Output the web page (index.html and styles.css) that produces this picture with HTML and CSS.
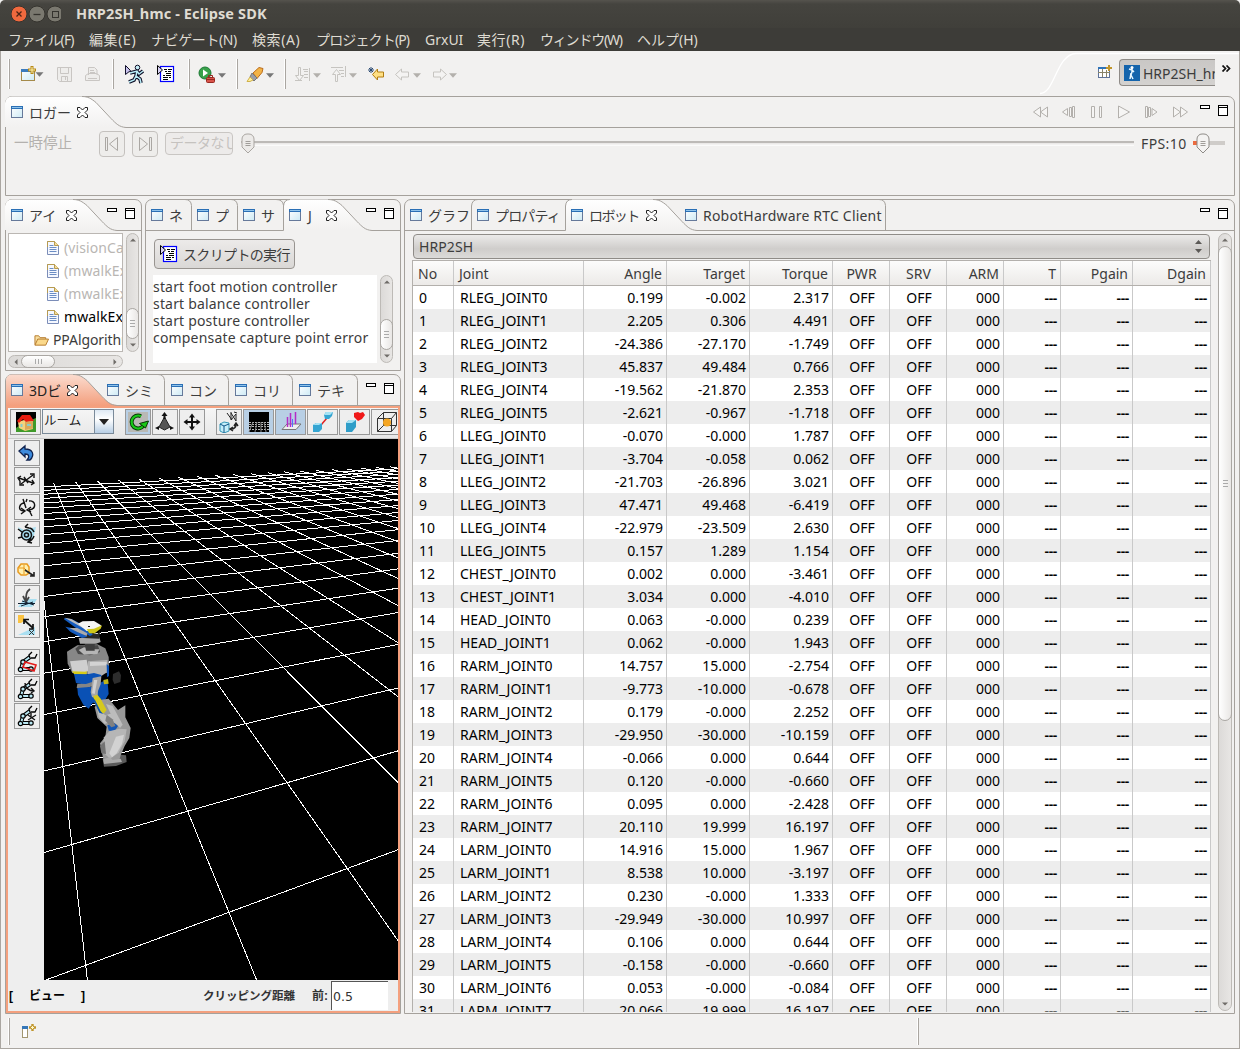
FILE: index.html
```html
<!DOCTYPE html>
<html lang="ja">
<head>
<meta charset="utf-8">
<title>HRP2SH_hmc - Eclipse SDK</title>
<link rel="stylesheet" href="styles.css">
</head>
<body>
<svg class="defs" width="0" height="0">
  <defs>
    <linearGradient id="tabFill" x1="0" y1="0" x2="0" y2="1"><stop offset="0" stop-color="#fff"/><stop offset="1" stop-color="#f2f1f0"/></linearGradient>
    <linearGradient id="hotFill" x1="0" y1="0" x2="0" y2="1"><stop offset="0" stop-color="#fbdccf"/><stop offset="1" stop-color="#f39a77"/></linearGradient>
    <linearGradient id="winFill" x1="0" y1="0" x2="1" y2="1"><stop offset="0" stop-color="#fff"/><stop offset="1" stop-color="#cdeaf5"/></linearGradient>
    <symbol id="win" viewBox="0 0 12 12"><rect x=".5" y=".5" width="11" height="11" fill="url(#winFill)" stroke="#66799a"/><path d="M0 1.5h12" stroke="#2a6fb5" stroke-width="3"/><path d="M1 1.5h10" stroke="#8fc3ea" stroke-width="1"/></symbol>
    <symbol id="close" viewBox="0 0 11 11"><path d="M.5.5h2.500l2.500 2.500 2.500-2.500h2.500v2.500l-2.500 2.500 2.500 2.500v2.500h-2.500l-2.500-2.500-2.500 2.500h-2.500v-2.500l2.500-2.500-2.500-2.500z" fill="#fff" stroke="#222"/></symbol>
    <symbol id="min" viewBox="0 0 10 4"><rect x=".5" y=".5" width="9" height="3" fill="#fff" stroke="#000"/></symbol>
    <symbol id="max" viewBox="0 0 10 11"><rect x=".5" y=".5" width="9" height="10" fill="#fff" stroke="#000"/><path d="M0 2.500h10" stroke="#000"/></symbol>
    <symbol id="drop" viewBox="0 0 8 5"><path d="M0 .3h8l-4 4.500z"/></symbol>
    <symbol id="doc" viewBox="0 0 12 14"><path d="M.5.5h7l4 4v9h-11z" fill="#f5f8ff" stroke="#7b8db8"/><path d="M.5 6V.5h7l4 4" fill="none" stroke="#b79b50"/><path d="M7.500.5v4h4" fill="#f3dc9a" stroke="#b79b50"/><path d="M2.500 4.500h4M2.500 6.500h7M2.500 8.500h7M2.500 10.500h7" stroke="#6b8dc4"/></symbol>
    <symbol id="script" viewBox="0 0 18 18"><rect x="3.500" y="1.500" width="13" height="15" fill="#fff" stroke="#00f" stroke-width="1.200"/><path d="M7 4.500h3m1 0h4M8 6.500h2m1 0h3M9 8.500h5M6 10.500h2m1 0h5M6 12.500h5m1 0h2M6 14.500h5" stroke="#000"/><path d="M.5.5v9l5-4.500z" fill="#d9d2f5" stroke="#000"/></symbol>
    <symbol id="down" viewBox="0 0 8 5"><path d="M0 .5h8L4 4.500z" fill="#6f6c68"/></symbol>
    <symbol id="arm" viewBox="0 0 22 22"><path d="M5 18L7 11L14 6M5 18h11" fill="none" stroke="#000" stroke-width="4"/><path d="M5 18L7 11L14 6M5 18h11" fill="none" stroke="#b9e8f3" stroke-width="2"/><g fill="#b9e8f3" stroke="#000" stroke-width="1.200"><circle cx="4.500" cy="18.500" r="2.200"/><circle cx="7" cy="11" r="2.200"/><circle cx="15" cy="18" r="2.200"/></g><path d="M14 7l-1-3 3-3M15 7h4l2-4" fill="none" stroke="#000" stroke-width="1.300"/></symbol>
  </defs>
</svg>

<div class="window">
  <header class="titlebar">
    <svg width="50" height="18" viewBox="0 0 50 18"><circle cx="8" cy="9" r="8" fill="#f0693e" stroke="#35332e"/><path d="M5.500 6.500l5 5m0-5l-5 5" stroke="#4d2415" stroke-width="1.300"/><circle cx="26" cy="9" r="8" fill="#7a786f" stroke="#35332e"/><path d="M22.500 9.500h7" stroke="#35332e" stroke-width="1.300"/><circle cx="44" cy="9" r="8" fill="#7a786f" stroke="#35332e"/><rect x="41.500" y="6.500" width="6" height="6" fill="none" stroke="#35332e"/></svg>
    <h1>HRP2SH_hmc - Eclipse SDK</h1>
  </header>
  <nav class="menu"><span class="n2">ファイル(F)</span><span class="p1">編集(E)</span><span class="n1">ナビゲート(N)</span><span class="p1">検索(A)</span><span class="n2">プロジェクト(P)</span><span>GrxUI</span><span class="p1">実行(R)</span><span class="n3">ウィンドウ(W)</span><span>ヘルプ(H)</span></nav>

  <div class="toolbar">
    <svg class="toolicons" width="470" height="45" viewBox="0 51 470 45" fill="none">
      <g stroke="#aaa6a1"><path d="M9.500 59v30M113.500 59v30M189.500 59v30M237.500 59v30M285.500 59v30"/></g>
      <g stroke="#fff"><path d="M8.500 59v30M112.500 59v30M188.500 59v30M236.500 59v30M284.500 59v30"/></g>
      <rect x="21.500" y="69.500" width="13" height="11" fill="url(#winFill)" stroke="#a58a4a"/><path d="M21 70.500h10" stroke="#3b7bbd" stroke-width="3"/><path d="M32 66v8m-4-4h8" stroke="#b88a18" stroke-width="3"/><path d="M32 67v6m-3-3h6" stroke="#fff3b0"/>
      <g fill="#777"><use href="#drop" x="35" y="72" width="9" height="5"/><use href="#drop" x="218" y="73" width="8" height="5"/><use href="#drop" x="266" y="73" width="8" height="5"/></g>
      <g fill="#b3b0ac"><use href="#drop" x="313" y="73" width="8" height="5"/><use href="#drop" x="349" y="73" width="8" height="5"/><use href="#drop" x="413" y="73" width="8" height="5"/><use href="#drop" x="449" y="73" width="8" height="5"/></g>
      <g stroke="#c9c6c3" fill="#eeedeb"><path d="M57.500 67.500h14v14h-12l-2-2z"/><path d="M60.500 68v5.500h8V68M61.500 81v-4.500h6V81M65.500 77v3"/><path d="M88.500 75v-7.500h6l2.500 2.500v5M85.500 75.500l3-2h8l3 2v5h-14zM90 70.500h4m-4 2h5M88 78.500h9"/></g>
      <path d="M130 73l7-2 2 3 4-3M137 71l-1 5 4 3 1 4M136 76l-2 4-5 2" stroke="#101028" stroke-width="3.600"/><circle cx="137.500" cy="67.500" r="2.300" fill="#c6eef8" stroke="#101028"/><path d="M130 73l7-2 2 3 4-3M137 71l-1 5 4 3 1 4M136 76l-2 4-5 2" stroke="#b9edf8" stroke-width="1.500"/><path d="M125.500 65.500v9l5-4z" fill="#c9c2ee" stroke="#101028"/>
      <use href="#script" x="157" y="65" width="18" height="18"/>
      <circle cx="205" cy="73" r="6" fill="#38a14a" stroke="#1d7a35"/><path d="M203 69.500v7l5-3.500z" fill="#fff"/><rect x="206.500" y="77.500" width="8" height="5" rx="1" fill="#d9534a" stroke="#982821"/><path d="M208.500 77v-1.500h4V77M207 79.500h7" stroke="#982821"/>
      <path d="M253 73l6-5.500 4 1-1 4-5 6z" fill="#f2b347" stroke="#bb6d1d"/><path d="M252 73l5 5-3 3-4-4z" fill="#9a9ea8" stroke="#777"/><path d="M250 77l3 3-3 1.500h-3z" fill="#ffef9b" stroke="#d0b14a"/>
      <g stroke="#c6c4c0" fill="#f4f3f2"><path d="M298.500 67.500h2v8h3l-4 5-4-5h3zM303 69.500h5m-4 2h4m-4 3h4m-4 3h4M295 80.500h7M309.500 68v13"/><path d="M335.500 81.500v-7h-3l4-5 4 5h-3v7zM331 67.500h12m-4 3h5m-3 3h3m-3 3h3M345.500 66v11"/><path d="M395.500 74.500l6-5.500v3h7v5h-7v3zM446.500 74.500l-6-5.500v3h-7v5h7v3z"/></g>
      <path d="M372.500 74.500l5-5.500v3h6v5h-6v3z" fill="#ffe084" stroke="#b17d12"/><path d="M371 67v6m-3-3h6m-5-2l4 4m0-4l-4 4" stroke="#2b4a73"/>
    </svg>
    <svg class="perspcurve" width="200" height="45" viewBox="1040 51 200 45"><path d="M960 93.500h80c15 0 16-39 36-40h163" fill="none" stroke="#fff" stroke-width="1.300"/></svg>
    <svg class="openpersp" width="14" height="14" viewBox="0 0 14 14"><rect x=".5" y="2.500" width="11" height="10" fill="#fff" stroke="#5f7399"/><path d="M0 3h9" stroke="#2f74b8" stroke-width="2"/><path d="M4.500 4v8M0 7.500h12M8.500 5v7" stroke="#8a8468"/><path d="M11 0v6M8 3h6" stroke="#c0952a" stroke-width="2"/></svg>
    <div class="persp"><svg width="16" height="16" viewBox="0 0 16 16"><path fill="#1464ac" d="M0 0h16v16H0z"/><path d="M8 2v5l-1 3 2 4M5 4l3 1 2 2M7 8l-1 6" stroke="#e8f6ff" stroke-width="1.500" fill="none"/><circle cx="8" cy="2.500" r="1.500" fill="#fff"/></svg><span>HRP2SH_hmc</span></div>
    <svg class="chev" width="9" height="7" viewBox="0 0 9 7"><path d="M.5.5l3 3-3 3m4-6l3 3-3 3" fill="none" stroke="#111" stroke-width="1.700"/></svg>
  </div>

  <main class="workbench">
    <section class="panel logger">
      <div class="tabs">
        <svg class="frame" width="1230" height="32" fill="none"><path d="M0 31V7Q1 .5 7 .5H77c6 0 9 2 14 6l15 16c5 5 8 8 15 8.500H0z" fill="url(#tabFill)"/><path d="M77 .5c6 0 9 2 14 6l15 16c5 5 8 8.500 15 9h1109" stroke="#a5a19c"/></svg>
        <div class="tab"><svg><use href="#win"/></svg><span>ロガー</span><svg class="x"><use href="#close"/></svg></div>
        <svg class="play" width="156" height="14" viewBox="1032 105 156 14" fill="#f6f5f4" stroke="#b3b0ac"><path d="M1040.500 107v10l-7-5zM1047.500 107v10l-7-5zM1067.500 108.500v7l-5-3.500zM1069.500 107.500h2v9h-2zM1072.500 106.500h2v11h-2zM1091.500 106.500h3v11h-3zM1099.500 106.500h2v11h-2zM1118.500 106v12l11-6zM1145.500 106.500h2v11h-2zM1148.500 107.500h2v9h-2zM1152 108.500v7l5-3.500zM1173.500 107v10l7-5zM1180.500 107v10l7-5z"/></svg>
        <svg class="minmax"><use href="#min" width="10" height="4"/><use href="#max" x="18" width="10" height="11"/></svg>
      </div>
      <div class="logbody">
        <span class="pause">一時停止</span>
        <button class="sq"><svg width="14" height="14" viewBox="0 0 14 14" fill="none" stroke="#aaa7a3"><path d="M.5.5h2v13h-2zM12.500.5v13l-8-6.500z"/></svg></button>
        <button class="sq"><svg width="14" height="14" viewBox="0 0 14 14" fill="none" stroke="#aaa7a3"><path d="M1.500.5v13l8-6.500zM11.500.5h2v13h-2z"/></svg></button>
        <div class="nodata">データなし</div>
        <div class="slider"><svg width="14" height="21" viewBox="0 0 14 21"><path d="M1 6a5 5 0 0 1 5-5h2a5 5 0 0 1 5 5v8l-6 6-6-6z" fill="#eceae8" stroke="#aaa6a2"/><path d="M4.500 8.500h5m-5 2h5m-5 2h5" stroke="#a09d99"/></svg></div>
        <span class="fps">FPS:10</span>
        <div class="slider small"><svg width="14" height="21" viewBox="0 0 14 21"><path d="M1 6a5 5 0 0 1 5-5h2a5 5 0 0 1 5 5v8l-6 6-6-6z" fill="#f4f3f2" stroke="#8e8b87"/><path d="M4.500 8.500h5m-5 2h5m-5 2h5" stroke="#a09d99"/></svg></div>
      </div>
    </section>

    <div class="columns">
      <div class="left">
        <div class="toprow">
          <section class="panel items">
            <div class="tabs">
              <svg class="frame" width="137" height="32" fill="none"><path d="M0 31V7Q1 .5 7 .5H68c6 0 9 2 14 6l15 16c5 5 8 8 15 8.500H0z" fill="url(#tabFill)"/><path d="M68 .5c6 0 9 2 14 6l15 16c5 5 8 8.500 15 9h25" stroke="#a5a19c"/></svg>
              <div class="tab"><svg><use href="#win"/></svg><span class="t24">アイ</span><svg class="x far"><use href="#close"/></svg></div>
              <svg class="minmax"><use href="#min" width="10" height="4"/><use href="#max" x="18" width="10" height="11"/></svg>
            </div>
            <div class="treewrap">
              <ul class="tree">
                <li class="off"><svg><use href="#doc"/></svg>(visionCapture)</li>
                <li class="off"><svg><use href="#doc"/></svg>(mwalkExec)</li>
                <li class="off"><svg><use href="#doc"/></svg>(mwalkExec)</li>
                <li class="on"><svg><use href="#doc"/></svg>mwalkExec</li>
                <li class="folder"><svg viewBox="0 0 16 14"><path d="M1 12V2.500h4l1.500 2h6V6" fill="#f8dfa0" stroke="#b4792b"/><path d="M1 12.500l3-6.500h11.500l-3 6.500z" fill="#fbd98b" stroke="#b4792b"/></svg>PPAlgorithm</li>
              </ul>
              <div class="vscroll"><svg class="up"><use href="#down"/></svg><i></i><svg><use href="#down"/></svg></div>
              <div class="hscroll"><svg class="lt"><use href="#down"/></svg><i></i><svg class="rt"><use href="#down"/></svg></div>
            </div>
          </section>

          <section class="panel jython">
            <div class="tabs g-jython">
              <svg class="frame" width="256" height="32" fill="none"><path d="M138.500 31V7Q139 .5 145 .5H183c6 0 9 2 14 6l15 16c5 5 8 8 15 8.500z" fill="url(#tabFill)"/><path d="M0 31.500H138.500V7Q139 .5 145 .5M183 .5c6 0 9 2 14 6l15 16c5 5 8 8.500 15 9h29M40 .5q6 0 6.500 6v25M86 .5q6 0 6.500 6v25M131 .5q7 0 7.500 6" stroke="#a5a19c"/></svg>
              <div class="tab"><svg><use href="#win"/></svg><span>ネ</span></div>
              <div class="tab"><svg><use href="#win"/></svg><span>プ</span></div>
              <div class="tab"><svg><use href="#win"/></svg><span>サ</span></div>
              <div class="tab"><svg><use href="#win"/></svg><span class="t10">J</span><svg class="x"><use href="#close"/></svg></div>
              <svg class="minmax"><use href="#min" width="10" height="4"/><use href="#max" x="18" width="10" height="11"/></svg>
            </div>
            <button class="runscript"><svg width="18" height="18"><use href="#script"/></svg>スクリプトの実行</button>
            <div class="console">
              <pre>start foot motion controller
start balance controller
start posture controller
compensate capture point error</pre>
              <div class="vscroll"><svg class="up"><use href="#down"/></svg><i></i><svg><use href="#down"/></svg></div>
            </div>
          </section>
        </div>

        <section class="panel view3d">
          <div class="tabs g-view">
            <svg class="frame" width="396" height="34" fill="none"><path d="M1 34V7Q1 .5 7 .5H68c6 0 9 2 14 6l15 16c5 5 8 8 15 8.500V34z" fill="url(#hotFill)"/><path d="M1 33.500V32H395v3H1z" fill="#f4a07e"/><path d="M68 .5c6 0 9 2 14 6l15 16c5 5 8 8.500 15 9h284M153 .5q6 0 6.500 6v25M217 .5q6 0 6.500 6v25M281 .5q6 0 6.500 6v25M346 .5q6 0 6.500 6v25" stroke="#a5a19c"/></svg>
            <div class="tab hot"><svg><use href="#win"/></svg><span>3Dビ</span><svg class="x"><use href="#close"/></svg></div>
            <div class="tab"><svg><use href="#win"/></svg><span>シミ</span></div>
            <div class="tab"><svg><use href="#win"/></svg><span>コン</span></div>
            <div class="tab"><svg><use href="#win"/></svg><span>コリ</span></div>
            <div class="tab"><svg><use href="#win"/></svg><span>テキ</span></div>
            <svg class="minmax"><use href="#min" width="10" height="4"/><use href="#max" x="18" width="10" height="11"/></svg>
          </div>
          <div class="viewbody">
            <div class="viewtools">
              <b class="w31"><svg width="20" height="20" viewBox="0 0 20 20"><path d="M0 0h20v20H0z"/><path d="M0 16l6-4 14-6v14H0z" fill="#3f9a2a"/><path d="M2 10l6-2 9 0v9l-8 2-6-3z" fill="#f3d27c"/><path d="M1 9l5-6 8 0 4 6-8 1-3-3-4 4z" fill="#e81c10"/><path d="M9 10v8l8-1.500V9z" fill="#d9a85a"/><path d="M11 12h4v2h-4zM4.500 12h2v3h-2z" fill="#8cc"/></svg></b>
              <div class="room"><span>ルーム</span><i><svg width="10" height="6" viewBox="0 0 10 6"><path d="M0 0h10L5 6z" fill="#222"/></svg></i></div>
              <b class="on g1"><svg width="22" height="22" viewBox="0 0 22 22"><path d="M1 1h20v20H1z" fill="#b9b9b5"/><path d="M14 5.200A6.500 6.500 0 1 0 17.500 12" fill="none" stroke="#063806" stroke-width="4"/><path d="M14 5.200A6.500 6.500 0 1 0 17.500 12" fill="none" stroke="#18c818" stroke-width="2.200"/><path d="M12.500 12.500l9-2.500-3 7z" fill="#18c818" stroke="#063806"/></svg></b>
              <b><svg width="22" height="22" viewBox="0 0 22 22"><path d="M10.500 6l5.500 10-5.500 3L5 16z" fill="#555" stroke="#222"/><path d="M7.500 5l3-4 3 4h-2v3h-2V5zM1 17l4-2v4zM20 17l-4-2v4z" fill="#111"/></svg></b>
              <b><svg width="22" height="22" viewBox="0 0 22 22"><path d="M11 4v14M4 11h14" stroke="#111" stroke-width="2"/><path d="M8 6.500L11 2.500l3 4zM8 15.500l3 4 3-4zM6.500 8l-4 3 4 3zM15.500 8l4 3-4 3z" fill="#111"/></svg></b>
              <b class="g1"><svg width="22" height="22" viewBox="0 0 22 22" fill="none" stroke="#222"><path d="M2 13l4-2 5 1v8l-5 2-4-2z" fill="#c5eefa" stroke="#3598b8"/><path d="M2 13l4 2 5-2M6 15v7" stroke="#158"/><path d="M9 2l5 7M13 1v8l5-6v7l-5-8M19 2l-3-1"/><path d="M13 18q5 0 5-5m-2 2l2-3 2 3m-5 1l-3 2 3 2" stroke-width="1.500"/></svg></b>
              <b class="on w31"><svg width="22" height="22" viewBox="0 0 22 22"><path d="M1 1h20v20H1z"/><path d="M1 11.500h20M1 13.500h20M1 15.500h20M1 18.500h20" stroke="#bbb" stroke-dasharray="2 1"/><path d="M5 11l-4 10M9 11l-2 10M13 11v10M16 11l2 10" stroke="#888"/></svg></b>
              <b class="on w31"><svg width="22" height="22" viewBox="0 0 22 22"><path d="M2 18.500l5-5.500h14l-5 5.500z" fill="#eee" stroke="#777"/><path d="M7.500 6v10M10.500 2v14M15.500 1v12" stroke="#b42bc7" stroke-width="1.500"/><path d="M12.500 8v8" stroke="#546eff"/></svg></b>
              <b class="w31"><svg width="22" height="22" viewBox="0 0 22 22"><path d="M9 14l6-7" stroke="#e02020" stroke-width="1.500"/><path d="M1 14l3-2h6v6l-3 3H1zM12 4l2-3h7l-1 4-3 3h-4z" fill="#35a5d2"/><path d="M1 14l3-2h6l-3 2zM12 4l2-3h7l-3 3z" fill="#a5e2f4"/></svg></b>
              <b class="w31"><svg width="22" height="22" viewBox="0 0 22 22"><path d="M2 12l3-3h7v7l-4 5H2z" fill="#2f9dc8"/><path d="M2 12l3-3h7l-4 3z" fill="#a5e2f4"/><path d="M10 2l4-1 2 1 3-1 2 3-3 4-4 2-4-4z" fill="#f01818"/></svg></b>
              <b class="w31"><svg width="22" height="22" viewBox="0 0 22 22" fill="none" stroke="#333"><path d="M1.500 7.500h14v13h-14zM7.500 1.500h13v13h-13zM1.500 7.500l6-6M15.500 7.500l5-6M15.500 20.500l5-6M1.500 20.500l6-6"/><circle cx="11" cy="11.500" r="4" fill="#f5a623" stroke="none"/></svg></b>
            </div>
            <div class="viewmid">
              <div class="sidetools">
                <b><svg viewBox="0 0 22 22"><path d="M3 9l6-5v3c8 0 10 6 5 11h-3c3-3 2-6-2-6v3z" fill="#3d8bdd" stroke="#10234f" stroke-width="1.300"/></svg></b>
                <b><svg viewBox="0 0 22 22" fill="none" stroke="#111" stroke-width="1.400"><path d="M3 9l14 5M5 15L17 6M8 8l4 6"/><path d="M5 7l-3 2 2 3M14 5l4 0 0 4m-3 7l3-2-2-3M4 12v4h4"/></svg></b>
                <b><svg viewBox="0 0 22 22" fill="none" stroke="#111" stroke-width="1.400"><path d="M7 3l3 9M11 3l-1 3M13 14l3 6M8 15C1 15 3 7 9 7M13 5c7-1 8 8 0 9M5 12l4 3-4 3M15 11l-4 3 4 2"/></svg></b>
                <b><svg viewBox="0 0 22 22"><path d="M2 4l6 3 3-1 9-2-3 12-9 1z" fill="#a9dff1"/><g fill="none" stroke="#111" stroke-width="1.500"><circle cx="10.500" cy="12" r="5"/><circle cx="10.500" cy="12" r="2"/><path d="M9 4l3-3m-3 3l4 1c3 0 4 2 5 4M18 13c-1 3-3 5-6 6m3-4l-3 4 4 1M2 6l4 3M2 15l4-1"/></g></svg></b>
                <b class="gap"><svg viewBox="0 0 22 22"><path d="M2 8l3-4h6l2 3v6l-3 2H5l-3-3z" fill="#fff0b0" stroke="#e99a1e" stroke-width="1.500"/><path d="M3 8h5l2 2M8 5v9" fill="none" stroke="#e99a1e"/><path d="M9 10l9 6m0-4v4h-4" fill="none" stroke="#222" stroke-width="1.600"/></svg></b>
                <b><svg viewBox="0 0 22 22"><path d="M2 20l6-8h13l-5 8z" fill="#a9dff1"/><path d="M14 2c-4 3-4 6-4 12M7 9l3 6 3-5" fill="none" stroke="#444" stroke-width="1.800"/><path d="M6 14l12 4M5 19l12-4M2 16.500h17" stroke="#123"/></svg></b>
                <b><svg viewBox="0 0 22 22"><path d="M2 1h6v6l-3 2H2z" fill="#fbc342"/><path d="M2 21l17-8v8z" fill="#a9dff1"/><path d="M8 6l9 8M8 10V5.500h5M17 10v5h-4" fill="none" stroke="#111" stroke-width="1.700"/><path d="M13 16l5 5m0-5l-5 5" stroke="#333"/></svg></b>
                <b class="gap"><svg viewBox="0 0 22 22"><use href="#arm"/><path d="M9 11l11 3-2 6-11-4z" fill="none" stroke="#e21b1b" stroke-width="1.600"/></svg></b>
                <b><svg viewBox="0 0 22 22"><use href="#arm"/><path d="M9 5c0 5 4 8 9 8m-3-3l3 3-3 2" fill="none" stroke="#111" stroke-width="1.400"/></svg></b>
                <b><svg viewBox="0 0 22 22"><use href="#arm"/><path d="M12 10l7 5m-7 0l8-5m-5-2v4" fill="none" stroke="#111" stroke-width="1.400"/></svg></b>
              </div>
              <svg class="scene" width="354" height="541" viewBox="0 0 354 541">
                <g id="floor" fill="none" stroke="#fff" shape-rendering="crispEdges"></g>
                <g transform="translate(6 161) scale(.33333)">
                  <path d="M189 222l18-8 6 12-2 20-18 6-5-12z" fill="#2d2d2d"/>
                  <path d="M158 478l56-14 14 2 2 20-32 12-36 2z" fill="#5a5a5a"/>
                  <path d="M82 136l60-3 24 12 10 26 1 28-6 20-70 4-34-4-14-28-2-36z" fill="#878787"/>
                  <path d="M76 146l12-10h56l6 20-30 10-36-4z" fill="#484848"/>
                  <path d="M86 150l16-8 34 6 12 0-6 14-40 2z" fill="#b5b5b5"/><path d="M104 130h30v22h-26z" fill="#3e3e3e"/>
                  <path d="M60 184l50-5 6 32-12 10-36-4z" fill="#cfcfcf"/><path d="M114 184l58-4v36l-18 12-40-6z" fill="#b3b3b3"/><path d="M120 186h50v10l-50 2z" fill="#d3d3d3"/>
                  <path d="M66 214l40 1 4-3v12H74z" fill="#d6cb18"/><path d="M72 222l40 1 20-4 22 6-2 18-42 12-32-6z" fill="#0b52b7"/>
                  <path d="M82 251l26 1 18-6 2 12-26 10-22-4z" fill="#858585"/><path d="M82 264l44-4 34-16 12-6 4 44-18 30-30-4-12 18-16-12-16-30z" fill="#0a51b5"/>
                  <path d="M170 192l7 6v30l-6 4z" fill="#0a51b5"/><path d="M160 240l14-3 2 14-14 2z" fill="#c0b518"/>
                  <path d="M128 234l26-5-2 24-8 20-2 24-16-6-4-14z" fill="#a7a7a7"/><path d="M132 240l10 0-8 42-8-2z" fill="#d0d0d0"/>
                  <path d="M134 322l14-22 28-4 28 34 22-14v36l16 32-4 30-14 24-12 28-4 14-46 8-8-40-4-18 16-20 4-30-28-26z" fill="#999"/>
                  <path d="M142 326l24 20 26-8 10 34-22-6-16 6-18-20z" fill="#bdbdbd"/><path d="M168 312l20 6 30 56-8 10-16-18z" fill="#bcbcbc"/>
                  <path d="M130 288l12-4 10 12 18 34-8 10-14-2-14-30z" fill="#d5c91d"/><path d="M130 300l18 38 12 4-8-8-18-36z" fill="#0a51b5"/>
                  <path d="M172 376l20-8 12 10-10 16-18-2z" fill="#1457b5"/><path d="M170 344l18 14 8 20-12 4-18-20z" fill="#808080"/>
                  <path d="M162 412l16-18 30-8 22 2-6 36-18 34-26 18-24-22z" fill="#b6b6b6"/><path d="M198 410l24-6-6 28-16 28-14 12-8-12z" fill="#d2d2d2"/><path d="M150 438l14-14 4 38-14-2z" fill="#737373"/>
                  <path d="M160 478l20-6 8 8 24-4 4 10-54 6z" fill="#aaa"/>
                  <path d="M86 114l62-2 4 14-14 5-48 0z" fill="#a9a9a9"/><path d="M102 92l40 10 8-10-2 24-48-2z" fill="#282828"/>
                  <path d="M44 54l22 4 46 24 16 22-8 4-42-24-36-26z" fill="#155cbf"/><path d="M44 53l20 4 48 28-12 0z" fill="#bbb"/><path d="M46 80l32 6 34 24-16 4-34-18z" fill="#155cbf"/><path d="M58 84l24 0 30 16-2 8-28-12z" fill="#aaa"/>
                  <path d="M84 71l14-7 34-1 20 12 2 6-30 12-14 0z" fill="#f4f4f4"/><path d="M110 88l22-2 24-10-4 10-18 14h-16z" fill="#cfc61a"/><path d="M114 78h6v3h-6z" fill="#111"/>
                </g>
              </svg>
            </div>
            <div class="viewfoot"><span class="mode"><span>[</span><span>ビュー</span><span>]</span></span><span class="clip">クリッピング距離</span><span class="front">前:</span><span class="num">0.5</span></div>
          </div>
        </section>
      </div>

      <section class="panel robot">
        <div class="tabs g-robot">
          <svg class="frame" width="831" height="32" fill="none"><path d="M161.500 31V7Q162 .5 168 .5H249c6 0 9 2 14 6l15 16c5 5 8 8 15 8.500z" fill="url(#tabFill)"/><path d="M0 31.500H161.500V7Q162 .5 168 .5M249 .5c6 0 9 2 14 6l15 16c5 5 8 8.500 15 9h538M67.500 31V7Q68 .5 74 .5M475 .5q6 0 6.500 6v25" stroke="#a5a19c"/></svg>
          <div class="tab"><svg><use href="#win"/></svg><span>グラフ</span></div>
          <div class="tab"><svg><use href="#win"/></svg><span class="n2">プロパティ</span></div>
          <div class="tab"><svg><use href="#win"/></svg><span class="t50">ロボット</span><svg class="x"><use href="#close"/></svg></div>
          <div class="tab"><svg><use href="#win"/></svg><span class="rtc">RobotHardware RTC Client</span></div>
          <svg class="minmax"><use href="#min" width="10" height="4"/><use href="#max" x="18" width="10" height="11"/></svg>
        </div>
        <div class="robotbody">
          <div class="main">
            <div class="select"><span>HRP2SH</span><svg width="7" height="13" viewBox="0 0 7 13"><path d="M0 4h7L3.500 0zM0 9h7l-3.500 4z" fill="#5b5956"/></svg></div>
            <div class="grid">
              <div class="row head"><span>No</span><span>Joint</span><span>Angle</span><span>Target</span><span>Torque</span><span>PWR</span><span>SRV</span><span>ARM</span><span>T</span><span>Pgain</span><span>Dgain</span></div>
              <div id="rows"></div>
            </div>
          </div>
          <div class="vscroll big"><svg class="up"><use href="#down"/></svg><i></i><svg><use href="#down"/></svg></div>
        </div>
      </section>
    </div>
  </main>

  <footer class="status"><i class="sep"></i><svg width="15" height="15" viewBox="0 0 15 15"><rect x=".5" y="2.500" width="5" height="11" fill="#fff" stroke="#a29670"/><path d="M0 3.500h6" stroke="#3677b8" stroke-width="3"/><path d="M10.500 0v7M7 3.500h7" stroke="#c0952a" stroke-width="2.400"/><path d="M10.500 2v3M9 3.500h3" stroke="#fff7c8"/></svg><i class="sep mid"></i></footer>
</div>
<script src="app.js"></script>
</body>
</html>
```
FILE: styles.css
```css
* { box-sizing: border-box; }
body { margin: 0; font: 14px/17px "Noto Sans", "Noto Sans CJK JP", sans-serif; color: #3c3c3c; }
svg { display: block; flex: none; }
.defs { position: absolute; }
.window { width: 1240px; height: 1049px; display: flex; flex-direction: column; background: #f2f1f0; overflow: hidden; }
.titlebar { height: 28px; display: flex; align-items: center; gap: 15px; padding-left: 11px; background: linear-gradient(#55534d, #45443f 4px, #403f3a); border-radius: 5px 5px 0 0; }
.titlebar h1 { margin: -2px 0 0; font-size: 14.500px; font-weight: 700; letter-spacing: .13px; color: #dfdbd2; }
.menu { height: 23px; display: grid; grid-template-columns: 81px 62px 101px 64px 109px 52px 63px 97px auto; align-items: center; padding: 0 0 1px 8px; background: #3d3c38; color: #dfdbd2; white-space: nowrap; }
.n1 { letter-spacing: -.4px; } .n2 { letter-spacing: -.85px; } .n3 { letter-spacing: -1.200px; } .p1 { letter-spacing: .6px; }
.toolbar { height: 45px; display: flex; align-items: center; border: 1px solid #aaa6a1; border-width: 0 1px; position: relative; }
.toolicons { margin-left: -1px; }
.perspcurve { position: absolute; right: -1px; top: 0; }
.openpersp { margin-left: auto; margin-right: 7px; position: relative; top: -2px; }
.persp { width: 96px; height: 27px; display: flex; align-items: center; gap: 3px; padding: 1px 0 0 4px; overflow: hidden; white-space: nowrap; border: 1px solid #8f8b87; border-right: 0; border-radius: 4px 0 0 4px; background: linear-gradient(#c9c7c5, #d4d2d0); position: relative; top: -1px; }
.chev { margin: -11px 8px 0 7px; }
.workbench { height: 918px; display: flex; flex-direction: column; gap: 3px; padding: 0 4px; border: 1px solid #aaa6a1; border-width: 0 1px; }
.panel { border: 1px solid #a5a19c; border-radius: 7px 7px 0 0; position: relative; display: flex; flex-direction: column; }
.tabs { height: 31px; flex: none; display: flex; align-items: center; position: relative; }
.frame { position: absolute; left: -1px; top: -1px; }
.tab { display: flex; align-items: center; padding: 0 0 1px 5px; position: relative; white-space: nowrap; }
.tab svg { width: 12px; height: 12px; }
.tab span { margin-left: 6px; }
.tab svg.x { width: 11px; height: 11px; margin-left: 6px; }
.tab svg.far { margin-left: 13px; }
.t24 { width: 24px; } .t10 { width: 13px; padding-left: 1px; } .t50 { width: 51px; letter-spacing: -1.600px; }
.tab.hot { color: #222; }
.minmax { width: 28px; height: 11px; margin: -5px 6px 0 auto; position: relative; }
.play { margin: -1px 0 0 auto; position: relative; }
.play + .minmax { margin-left: 12px; }
.logger { height: 100px; flex: none; }
.logbody { display: flex; align-items: center; height: 31px; padding-left: 8px; }
.pause { width: 85px; font-size: 14.500px; color: #b4b1ae; padding-bottom: 2px; }
.sq { width: 26px; height: 26px; padding: 0; margin-right: 7px; display: grid; place-items: center; border: 1px solid #c4c1be; border-radius: 4px; background: #eeedeb; }
.nodata { width: 68px; height: 23px; padding: 1px 4px; overflow: hidden; white-space: nowrap; letter-spacing: -.5px; border: 1px solid #c9c6c3; border-radius: 4px; color: #c5c2bf; background: #edebea; }
.slider { width: 893px; height: 21px; margin-left: 8px; background: linear-gradient(#bdbab7 2px, #e7e5e3 2px, #fff) 0 8px / 100% 5px no-repeat; }
.fps { margin-left: 7px; width: 52px; white-space: nowrap; letter-spacing: .4px; }
.slider.small { width: 32px; margin: 0; padding-left: 3px; border-radius: 4px; background-image: linear-gradient(90deg, #ec6b3f 5px, #cfccc9 5px); background-size: 100% 4px; }
.columns { display: flex; gap: 3px; height: 815px; }
.left { width: 396px; display: flex; flex-direction: column; gap: 3px; flex: none; }
.toprow { display: flex; gap: 3px; height: 172px; }
.items { width: 137px; }
.jython { width: 256px; }
.g-jython { display: grid; grid-template-columns: 46px 46px 46px 80px 1fr; }
.g-view { display: grid; grid-template-columns: 96px 64px 64px 64px 64px 1fr; }
.g-robot { display: grid; grid-template-columns: 67px 94px 114px 210px 1fr; }
.treewrap { display: grid; grid-template-columns: 115px 14px; grid-template-rows: 119px 14px; gap: 3px 3px; padding: 2px 0 0 2px; }
.tree { margin: 0; padding: 2px 0 0; list-style: none; border: 1px solid #bbb7b3; background: #fff; overflow: hidden; white-space: nowrap; }
.tree li { display: flex; align-items: center; gap: 5px; height: 23px; padding-left: 38px; letter-spacing: .1px; }
.tree svg { width: 12px; height: 14px; }
.tree .folder { padding-left: 25px; gap: 4px; letter-spacing: -.1px; }
.tree .folder svg { width: 15px; }
.tree .off { color: #b9b6b3; }
.tree .on { color: #000; }
.vscroll, .hscroll { display: flex; flex-direction: column; align-items: center; justify-content: space-between; width: 13px; border: 1px solid #bdbab6; border-radius: 7px; background: linear-gradient(90deg, #dcdad8, #e8e6e4); padding: 4px 0; }
.vscroll svg, .hscroll svg { width: 6px; height: 4px; }
.up { transform: rotate(180deg); } .lt { transform: rotate(90deg); } .rt { transform: rotate(-90deg); }
.vscroll i { width: 13px; height: 31px; flex: none; margin-top: auto; margin-bottom: 4px; border: 1px solid #aaa7a3; border-radius: 7px; background: repeating-linear-gradient(#aaa 0 1px, transparent 1px 3px) 50% 50% / 5px 7px no-repeat, linear-gradient(90deg, #fff, #e9e7e5); }
.hscroll { flex-direction: row; width: 115px; height: 13px; padding: 0 4px; }
.hscroll i { width: 34px; height: 13px; margin-right: auto; margin-left: 2px; border: 1px solid #aaa7a3; border-radius: 7px; background: repeating-linear-gradient(90deg, #aaa 0 1px, transparent 1px 3px) 50% 50% / 7px 5px no-repeat, linear-gradient(#fff, #e9e7e5); }
.runscript { width: 141px; height: 30px; margin: 8px 0 6px 8px; padding: 0 0 0 5px; display: flex; align-items: center; gap: 5px; font: inherit; letter-spacing: -.65px; color: #3c3c3c; white-space: nowrap; border: 1px solid #989490; border-radius: 4px; background: linear-gradient(#eceae9, #dad8d6); }
.console { display: flex; gap: 3px; padding-left: 7px; height: 88px; }
.console pre { margin: 0; width: 224px; padding: 3px 0 0; background: #fff; font: inherit; letter-spacing: .18px; }
.view3d { flex: 1; border-color: #a5a19c; }
.viewbody { margin: 2px 0 0; border: 2px solid #f4a07e; border-top: 0; background: #eee; flex: 1; display: flex; flex-direction: column; overflow: hidden; }
.viewtools { height: 31px; flex: none; display: flex; align-items: flex-start; gap: 1px; padding: 1px 0 0 2px; overflow: hidden; border-bottom: 1px solid #ccc; background: linear-gradient(#f6f6f6, #e7e7e7); }
.viewtools b, .sidetools b { width: 26px; height: 26px; flex: none; display: grid; place-items: center; border: 1px solid #989898; background: #eee; }
.viewtools .w31 { width: 31px; }
.viewtools .on { background: #b8cfe5; }
.viewtools .g1 { margin-left: 10px; }
.room { display: flex; flex: none; width: 72px; height: 25px; border: 1px solid #7a8a99; font-size: 12.500px; color: #222; }
.room span { flex: 1; padding: 2px 1px; white-space: nowrap; }
.room i { width: 19px; display: grid; place-items: center; border-left: 1px solid #7a8a99; background: linear-gradient(#dde8f3, #fff 40%, #b8cfe5); }
.viewmid { display: flex; height: 541px; }
.sidetools { width: 36px; padding: 1px 0 0 6px; display: flex; flex-direction: column; gap: 1px; }
.sidetools svg { width: 22px; height: 22px; }
.sidetools .gap { margin-top: 10px; }
.scene { background: #000; }
.viewfoot { display: flex; align-items: center; height: 31px; padding-left: 1px; font: bold 12px/14px "Liberation Sans", "Noto Sans CJK JP", sans-serif; color: #333; white-space: nowrap; }
.mode { width: 194px; color: #000; display: flex; gap: 16px; }
.clip { width: 109px; font-size: 11.500px; }
.front { width: 19px; }
.num { width: 57px; height: 29px; padding: 7px 1px; font: 12.500px/15px "DejaVu Sans", sans-serif; background: #fff; border-top: 1px solid #555; border-left: 1px solid #555; }
.robot { width: 831px; }
.rtc { letter-spacing: .2px; }
.robotbody { display: flex; gap: 7px; padding: 2px 0 0 7px; flex: 1; min-height: 0; margin-bottom: 1px; }
.main { width: 799px; display: flex; flex-direction: column; gap: 1px; overflow: hidden; }
.select { height: 25px; flex: none; margin: 1px 1px 0; padding: 0 7px 0 5px; display: flex; align-items: center; justify-content: space-between; border: 1px solid #8f8c88; border-radius: 4px; background: linear-gradient(#ebeae9, #cfcdcb 60%, #dcdbd9); }
.select span { letter-spacing: .1px; }
.grid { border: 1px solid #b3b0ac; border-width: 1px 0 0 1px; overflow: hidden; flex: 1; color: #000; background: #fff; }
.row { display: grid; grid-template-columns: 41px 130px 83px 83px 83px 57px 57px 57px 57px 72px 78px; height: 23px; }
.row span { border-right: 1px solid #c9c9c9; padding: 3px 3px 0 6px; text-align: right; }
.row span:nth-child(-n+2) { text-align: left; }
.row span:nth-child(6), .row span:nth-child(7) { text-align: center; padding-left: 5px; }
.row:not(.head) span:nth-child(n+9) { letter-spacing: -.3px; font-weight: 600; }
.row:nth-child(even) { background: #ededed; }
.row.head { height: 25px; color: #3c3c3c; background: linear-gradient(#fcfcfb, #eceae8); border-bottom: 1px solid #b3b0ac; }
.row.head span { padding: 4px 4px 0 5px; }
.vscroll.big { width: 14px; padding: 4px 0 4px; height: 778px; }
.vscroll.big i { width: 14px; height: 475px; margin: 4px 0 auto; }
.status { height: 35px; display: flex; align-items: flex-start; padding: 4px 0 0 7px; border: 1px solid #aaa6a1; border-top: 0; }
.status svg { margin: 6px 0 0 12px; }
.sep { width: 2px; height: 27px; border-left: 1px solid #fff; border-right: 1px solid #aaa6a1; }
.mid { margin-left: 880px; }
```
FILE: app.js
```js
const joints = [
  ["RLEG_JOINT0", "0.199", "-0.002", "2.317"], ["RLEG_JOINT1", "2.205", "0.306", "4.491"],
  ["RLEG_JOINT2", "-24.386", "-27.170", "-1.749"], ["RLEG_JOINT3", "45.837", "49.484", "0.766"],
  ["RLEG_JOINT4", "-19.562", "-21.870", "2.353"], ["RLEG_JOINT5", "-2.621", "-0.967", "-1.718"],
  ["LLEG_JOINT0", "-0.070", "-0.000", "1.787"], ["LLEG_JOINT1", "-3.704", "-0.058", "0.062"],
  ["LLEG_JOINT2", "-21.703", "-26.896", "3.021"], ["LLEG_JOINT3", "47.471", "49.468", "-6.419"],
  ["LLEG_JOINT4", "-22.979", "-23.509", "2.630"], ["LLEG_JOINT5", "0.157", "1.289", "1.154"],
  ["CHEST_JOINT0", "0.002", "0.000", "-3.461"], ["CHEST_JOINT1", "3.034", "0.000", "-4.010"],
  ["HEAD_JOINT0", "0.063", "-0.000", "0.239"], ["HEAD_JOINT1", "0.062", "-0.000", "1.943"],
  ["RARM_JOINT0", "14.757", "15.000", "-2.754"], ["RARM_JOINT1", "-9.773", "-10.000", "-0.678"],
  ["RARM_JOINT2", "0.179", "-0.000", "2.252"], ["RARM_JOINT3", "-29.950", "-30.000", "-10.159"],
  ["RARM_JOINT4", "-0.066", "0.000", "0.644"], ["RARM_JOINT5", "0.120", "-0.000", "-0.660"],
  ["RARM_JOINT6", "0.095", "0.000", "-2.428"], ["RARM_JOINT7", "20.110", "19.999", "16.197"],
  ["LARM_JOINT0", "14.916", "15.000", "1.967"], ["LARM_JOINT1", "8.538", "10.000", "-3.197"],
  ["LARM_JOINT2", "0.230", "-0.000", "1.333"], ["LARM_JOINT3", "-29.949", "-30.000", "10.997"],
  ["LARM_JOINT4", "0.106", "0.000", "0.644"], ["LARM_JOINT5", "-0.158", "-0.000", "-0.660"],
  ["LARM_JOINT6", "0.053", "-0.000", "-0.084"], ["LARM_JOINT7", "20.066", "19.999", "16.197"]
];
document.getElementById("rows").innerHTML = joints.map((j, n) =>
  `<div class="row">${[n, ...j, "OFF", "OFF", "000", "---", "---", "---"].map(c => `<span>${c}</span>`).join("")}</div>`
).join("");

// Camera projection of floor cell (i, j) to viewport pixels.
function project(i, j) {
  const u = i / 2, v = j / 3, w = 1 + 0.21007 * u + 0.82392 * v;
  const x = (978.68 * u - 45.8 * v + 137) / w, y = (-16.61 * u - 72.11 * v + 1482) / w;
  return (x / 3 - 4).toFixed(2) + " " + (y / 2.8 - 3).toFixed(2);
}
let d = "";
for (let i = 0; i <= 30; i++) d += `M${project(i, -0.8)}L${project(i, 22)}`;
for (let j = 0; j <= 21; j++) d += `M${project(-1, j)}L${project(30, j)}`;
document.getElementById("floor").innerHTML = `<path d="${d}"/>`;
```
